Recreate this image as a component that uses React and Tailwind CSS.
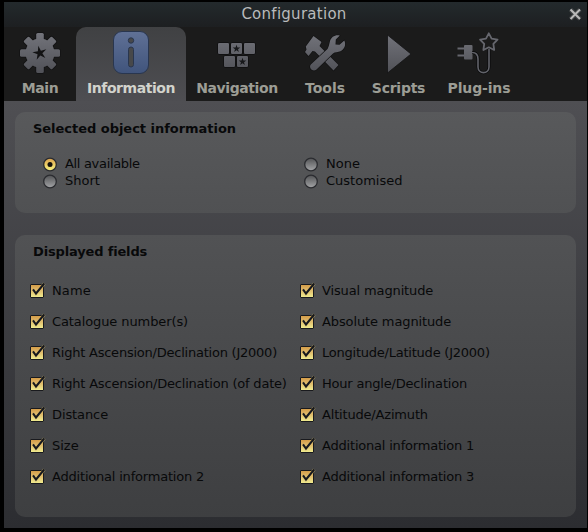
const star = (cx, cy, outer, inner, turn = 0) =>
  Array.from({ length: 10 }, (_, i) => {
    const r = i % 2 ? inner : outer;
    const a = -Math.PI / 2 + turn + (i * Math.PI) / 5;
    return `${(cx + r * Math.cos(a)).toFixed(2)},${(cy + r * Math.sin(a)).toFixed(2)}`;
  }).join(' ');

function Icon({ children }) {
  return (
    <svg width="46" height="48" viewBox="-1 0 46 48" className="shrink-0" strokeLinejoin="round">
      {children}
    </svg>
  );
}

function GearIcon() {
  return (
    <Icon>
      <g stroke="#131314" strokeWidth="1.6" fill="#131314">
        {[0, 45, 90, 135].map((a) => (
          <rect key={a} x="18.2" y="4" width="7.6" height="40" rx="1.5" transform={`rotate(${a} 22 24)`} />
        ))}
        <circle cx="22" cy="24" r="14.5" />
      </g>
      <mask id="gear">
        <g fill="#fff">
          {[0, 45, 90, 135].map((a) => (
            <rect key={a} x="18.2" y="4" width="7.6" height="40" rx="1.5" transform={`rotate(${a} 22 24)`} />
          ))}
          <circle cx="22" cy="24" r="14.5" />
        </g>
        <polygon points={star(21.8, 24, 7.5, 2.6, -0.2)} fill="#000" />
      </mask>
      <rect width="44" height="48" fill="url(#metal)" mask="url(#gear)" />
    </Icon>
  );
}

function InfoIcon() {
  return (
    <Icon>
      <rect x="4.5" y="2.5" width="35" height="42" rx="8.5" fill="url(#blue)" stroke="#29364f" />
      <circle cx="22" cy="11.5" r="2.7" fill="#47484a" stroke="#29364f" />
      <rect x="19.5" y="18" width="5" height="20" rx="2.5" fill="#47484a" stroke="#29364f" />
    </Icon>
  );
}

function NavigationIcon() {
  return (
    <Icon>
      {[[3, 14], [16, 14], [29, 14], [9, 27], [22, 27]].map(([x, y]) => (
        <rect key={`${x}-${y}`} x={x - 0.5} y={y - 0.5} width="12" height="12" rx="1.5" fill="url(#metal)" stroke="#111112" />
      ))}
      <polygon points={star(21.5, 19.7, 4, 1.6)} fill="#17181a" />
      <polygon points={star(27.5, 32.7, 4, 1.6)} fill="#17181a" />
    </Icon>
  );
}

function ToolsIcon() {
  return (
    <Icon>
      <g fill="url(#metal)" stroke="#111112" strokeWidth="1.2" style={{ paintOrder: 'stroke' }}>
        <path d="M10.500 7 L18.500 13 L16.500 17 L35.500 36 L30.500 41.500 L12 22.500 L9.500 22 L5.500 27 L2 23 L3.500 20.500 L2.800 17.500 Z" />
        <path d="M24.500 20 C25.800 18 26.200 15 27 12 C28.200 8 32 5.500 36.800 6.500 L32.800 10.500 L32.500 15.500 L36.500 15.800 L41.300 11.500 C43.500 16 41 20.500 37.500 22.300 C35 23.500 32 22.800 30 24.500 L13.500 40.500 C10 43.500 5.200 39 7.800 35.500 Z" />
      </g>
    </Icon>
  );
}

function ScriptsIcon() {
  return (
    <Icon>
      <path d="M10.500 6 L34 25 L10.500 44 Z" fill="url(#metal)" stroke="#131314" strokeWidth="0.8" />
    </Icon>
  );
}

function PluginIcon() {
  return (
    <Icon>
      <path d="M0.500 19.500 H8 M0.500 26.500 H8" stroke="#66676e" strokeWidth="2" />
      <rect x="7" y="16" width="8.500" height="14.500" rx="1" fill="url(#metal)" />
      <path d="M15 23.500 C19 23.500 21 25 21 30 V38 C21 45.500 32 45.500 32 38 V20" fill="none" stroke="#08090a" strokeWidth="3" />
      <path d="M15 23.500 C19 23.500 21 25 21 30 V38 C21 45.500 32 45.500 32 38 V20" fill="none" stroke="#62636a" strokeWidth="1.600" />
      <polygon points={star(31.8, 13.500, 9.200, 4.800)} fill="#1b1b1b" stroke="#66676e" strokeWidth="1.800" />
    </Icon>
  );
}

const tabs = [
  ['Main', GearIcon, 'w-[72px]', 'tracking-[-0.4px]'],
  ['Information', InfoIcon, 'w-[110px]', 'tracking-[-0.45px]'],
  ['Navigation', NavigationIcon, 'w-[102px]', 'tracking-[-0.4px]'],
  ['Tools', ToolsIcon, 'w-[74px]', 'tracking-[0px]'],
  ['Scripts', ScriptsIcon, 'w-[73px]', 'tracking-[-0.25px]'],
  ['Plug-ins', PluginIcon, 'w-[88px]', 'tracking-[-0.15px]'],
];

const fields = [
  ['Name', 'tracking-[0.1px]'],
  ['Visual magnitude', 'tracking-[-0.13px]'],
  ['Catalogue number(s)', 'tracking-[-0.1px]'],
  ['Absolute magnitude', 'tracking-[-0.12px]'],
  ['Right Ascension/Declination (J2000)', 'tracking-[-0.23px]'],
  ['Longitude/Latitude (J2000)', 'tracking-[-0.23px]'],
  ['Right Ascension/Declination (of date)', 'tracking-[-0.2px]'],
  ['Hour angle/Declination', 'tracking-[-0.2px]'],
  ['Distance', 'tracking-[-0.1px]'],
  ['Altitude/Azimuth', 'tracking-[-0.18px]'],
  ['Size', 'tracking-[0px]'],
  ['Additional information 1', 'tracking-[-0.2px]'],
  ['Additional information 2', 'tracking-[-0.2px]'],
  ['Additional information 3', 'tracking-[-0.2px]'],
];

function Radio({ label, checked, tracking = '' }) {
  return (
    <div className="flex h-[17px] items-center">
      <svg width="14" height="15" viewBox="0 0 14 15" className="mr-2 mt-px shrink-0">
        <circle cx="7" cy="7.500" r="6.300" fill={checked ? 'url(#gold-round)' : 'url(#silver)'} stroke="#2b2c30" strokeWidth="1.300" />
        {checked && <circle cx="7" cy="7.500" r="2.500" fill="#15120c" />}
      </svg>
      <span className={`leading-[17px] ${tracking}`}>{label}</span>
    </div>
  );
}

function CheckField({ label, tracking }) {
  return (
    <div className="flex h-[31px] items-center">
      <svg width="17" height="18" viewBox="0 0 17 18" className="-ml-px mb-0.5 mr-1.5 shrink-0">
        <rect x="1.500" y="3.500" width="13" height="13" rx="0.500" fill="url(#gold)" stroke="#191a1e" />
        <path d="M4 8.500 L7 13 L15.300 2.500" fill="none" stroke="#dfc978" strokeOpacity="0.5" strokeWidth="3.200" />
        <path d="M4 8.300 L7 12.500 L15.200 2.500" fill="none" stroke="#17181d" strokeWidth="2" />
      </svg>
      <span className={`whitespace-nowrap leading-[17px] ${tracking}`}>{label}</span>
    </div>
  );
}

export default function App() {
  return (
    <div className="h-[532px] w-[588px] overflow-hidden bg-black pl-1 pr-px pt-0.5 font-['DejaVu_Sans',sans-serif] text-[13px] text-[#08090a]">
      <svg width="0" height="0" className="absolute">
        <defs>
          <linearGradient id="metal" gradientUnits="userSpaceOnUse" x1="0" y1="4" x2="0" y2="44">
            <stop stopColor="#73747b" />
            <stop offset="1" stopColor="#505157" />
          </linearGradient>
          <linearGradient id="blue" x1="0" y1="0" x2="0" y2="1">
            <stop stopColor="#607196" />
            <stop offset="1" stopColor="#40547c" />
          </linearGradient>
          <linearGradient id="gold" x1="0" y1="0" x2="0" y2="1">
            <stop stopColor="#d39a45" />
            <stop offset="0.4" stopColor="#dfb768" />
            <stop offset="1" stopColor="#f0ee91" />
          </linearGradient>
          <linearGradient id="gold-round" x1="0" y1="0" x2="0" y2="1">
            <stop stopColor="#d9a04a" />
            <stop offset="0.6" stopColor="#efd56c" />
            <stop offset="1" stopColor="#f6f27c" />
          </linearGradient>
          <linearGradient id="silver" x1="0" y1="0" x2="0" y2="1">
            <stop stopColor="#525355" />
            <stop offset="1" stopColor="#a4a5a7" />
          </linearGradient>
        </defs>
      </svg>
      <div className="flex h-[526px] flex-col bg-[#4d4d51]">
        <header className="flex h-[25px] shrink-0 items-center bg-linear-to-b from-[#232a2d] to-[#1d1f21] text-[#b9babb]">
          <h1 className="flex-1 pl-[18px] text-center text-[15px] leading-[25px] tracking-[0.27px]">Configuration</h1>
          <svg width="20" height="20" viewBox="0 0 20 20" className="mr-px">
            <path d="M4.500 4.500 L14 14 M14 4.500 L4.500 14" stroke="#777" strokeOpacity="0.35" strokeWidth="4.500" />
            <path d="M4.500 4.500 L14 14 M14 4.500 L4.500 14" stroke="#b9b9b9" strokeWidth="2" />
          </svg>
        </header>
        <nav className="flex h-[74px] shrink-0 bg-[#1b1b1b]">
          {tabs.map(([name, TabIcon, width, tracking], i) => (
            <div
              key={name}
              className={`flex h-[74px] shrink-0 flex-col items-center pt-0.5 ${width} ${i === 1 ? 'rounded-t-[10px] bg-linear-to-b from-[#404143] to-[#4e4e52] text-[#d2d3cc]' : 'text-[#9c9d95]'}`}
            >
              <TabIcon />
              <span className={`mt-0.5 whitespace-nowrap text-[14px] font-bold leading-[18px] ${tracking}`}>{name}</span>
            </div>
          ))}
        </nav>
        <main className="flex h-[427px] flex-col bg-linear-to-b from-[#4f4f53] to-[#2c2d31] px-[11px] pt-[11px]">
          <section className="h-[101px] rounded-[10px] bg-linear-to-b from-[#58595b] to-[#505153] pl-[18px] pt-2">
            <h2 className="font-bold leading-[17px] tracking-[-0.03px]">Selected object information</h2>
            <div className="mt-[18px] grid grid-cols-[261px_1fr] pl-[10px]">
              <Radio label="All available" tracking="tracking-[-0.32px]" checked />
              <Radio label="None" />
              <Radio label="Short" />
              <Radio label="Customised" />
            </div>
          </section>
          <section className="mt-[22px] h-[282px] rounded-[10px] bg-linear-to-b from-[#515254] to-[#3e3f41] pl-[15px] pt-2">
            <h2 className="pl-[3px] font-bold leading-[17px] tracking-[-0.16px]">Displayed fields</h2>
            <div className="mt-[15px] grid grid-cols-[270px_1fr]">
              {fields.map(([label, tracking]) => (
                <CheckField key={label} label={label} tracking={tracking} />
              ))}
            </div>
          </section>
        </main>
      </div>
    </div>
  );
}
